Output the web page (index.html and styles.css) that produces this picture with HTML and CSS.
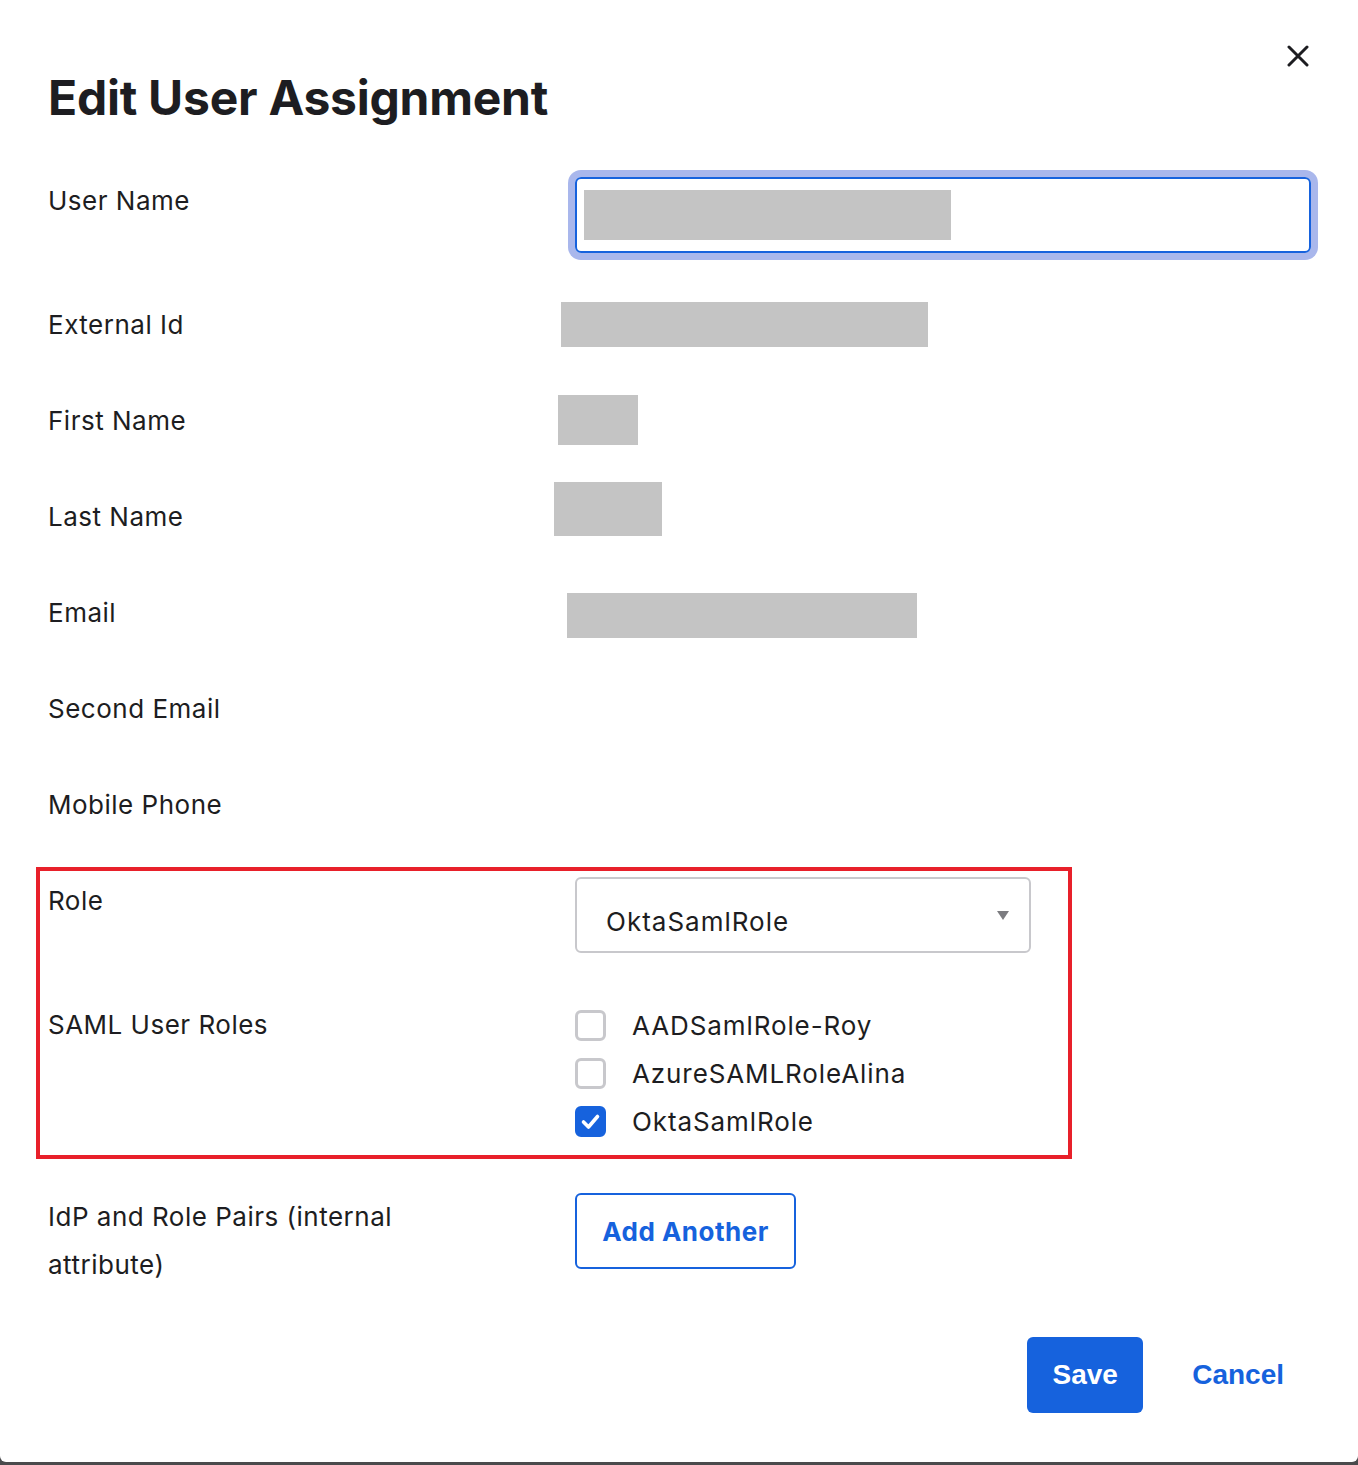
FILE: index.html
```html
<!DOCTYPE html>
<html lang="en">
<head>
<meta charset="utf-8">
<title>Edit User Assignment</title>
<link rel="stylesheet" href="styles.css">
</head>
<body>
<div class="modal">
  <header class="modal-header">
    <h1 class="title">Edit User Assignment</h1>
    <button class="close" aria-label="Close">
      <svg width="22" height="22" viewBox="0 0 22 22"><path d="M2 2 L20 20 M20 2 L2 20" stroke="#1d1d21" stroke-width="3" stroke-linecap="round" fill="none"/></svg>
    </button>
  </header>

  <div class="form">
    <div class="row">
      <div class="label">User Name</div>
      <div class="value">
        <div class="input focused"><div class="redact r-user"></div></div>
      </div>
    </div>
    <div class="row">
      <div class="label">External Id</div>
      <div class="value fixed"><div class="redact r-ext"></div></div>
    </div>
    <div class="row">
      <div class="label">First Name</div>
      <div class="value fixed"><div class="redact r-first"></div></div>
    </div>
    <div class="row">
      <div class="label">Last Name</div>
      <div class="value fixed"><div class="redact r-last"></div></div>
    </div>
    <div class="row">
      <div class="label">Email</div>
      <div class="value fixed"><div class="redact r-email"></div></div>
    </div>
    <div class="row">
      <div class="label">Second Email</div>
      <div class="value fixed"></div>
    </div>
    <div class="row">
      <div class="label">Mobile Phone</div>
      <div class="value fixed"></div>
    </div>

    <div class="highlight">
      <div class="row">
        <div class="label">Role</div>
        <div class="value">
          <div class="select">
            <span class="select-text">OktaSamlRole</span>
            <span class="caret"></span>
          </div>
        </div>
      </div>
      <div class="row">
        <div class="label">SAML User Roles</div>
        <div class="value">
          <ul class="checks">
            <li class="check"><span class="box"></span><span>AADSamlRole-Roy</span></li>
            <li class="check"><span class="box"></span><span>AzureSAMLRoleAlina</span></li>
            <li class="check"><span class="box checked"><svg width="31" height="31" viewBox="0 0 31 31"><path d="M8.5 16 L13.5 21 L22.5 10.5" stroke="#fff" stroke-width="3.6" stroke-linecap="round" stroke-linejoin="round" fill="none"/></svg></span><span>OktaSamlRole</span></li>
          </ul>
        </div>
      </div>
    </div>

    <div class="row">
      <div class="label">IdP and Role Pairs (internal<br>attribute)</div>
      <div class="value">
        <button class="btn-secondary">Add Another</button>
      </div>
    </div>
  </div>

  <footer class="footer">
    <button class="btn-primary">Save</button>
    <button class="btn-link">Cancel</button>
  </footer>
</div>
</body>
</html>
```

FILE: styles.css
```css
* { box-sizing: border-box; }
html, body { margin: 0; padding: 0; }
body {
  background: #4a4a4c;
  font-family: "Inter", "Liberation Sans", sans-serif;
  color: #1d1d21;
}
.modal {
  width: 1358px;
  height: 1462px;
  background: #ffffff;
  border-radius: 0 0 6px 6px;
  padding: 0 50px 0 48px;
}
.modal-header {
  display: flex;
  justify-content: space-between;
  align-items: flex-start;
}
.title {
  margin: 70px 0 0 0;
  font-size: 48px;
  line-height: 56px;
  font-weight: 700;
  letter-spacing: -0.25px;
}
.close {
  margin-top: 45px;
  margin-right: -1px;
  padding: 0;
  border: 0;
  background: none;
  width: 22px;
  height: 22px;
  display: block;
}
.close svg { display: block; }

.form {
  margin-top: 51px;
  display: flex;
  flex-direction: column;
  gap: 48px;
}
.row {
  display: grid;
  grid-template-columns: 527px 1fr;
  align-items: start;
}
.label {
  font-size: 26px;
  line-height: 48px;
  letter-spacing: 0.5px;
}
.value.fixed { height: 48px; }

.input {
  width: 736px;
  height: 76px;
  border: 2px solid #1662dd;
  border-radius: 6px;
  padding: 11px 7px;
}
.input.focused { box-shadow: 0 0 0 7px #a9b7ec; }

.redact { background: #c4c4c4; }
.r-user { width: 367px; height: 50px; }
.r-ext { width: 367px; height: 45px; margin: 1px 0 0 -14px; }
.r-first { width: 80px; height: 50px; margin: -2px 0 0 -17px; }
.r-last { width: 108px; height: 54px; margin: -11px 0 0 -21px; }
.r-email { width: 350px; height: 45px; margin: 4px 0 0 -8px; }

.highlight {
  display: flex;
  flex-direction: column;
  gap: 48px;
  width: 1036px;
  margin: -10px 0 -14px -12px;
  padding: 6px 8px 10px 8px;
  border: 4px solid #e8202a;
}

.select {
  width: 456px;
  height: 76px;
  border: 2px solid #c8c8cc;
  border-radius: 6px;
  display: flex;
  align-items: center;
  justify-content: space-between;
  padding: 14px 20px 0 29px;
}
.select-text { font-size: 26px; line-height: 48px; letter-spacing: 1px; }
.caret {
  width: 0; height: 0;
  border-left: 6px solid transparent;
  border-right: 6px solid transparent;
  border-top: 9px solid #7c7c80;
  margin-top: -14px;
}

.checks { list-style: none; margin: 0; padding: 0; }
.check {
  display: flex;
  align-items: center;
  gap: 26px;
  height: 48px;
  font-size: 26px;
  letter-spacing: 0.9px;
}
.box {
  width: 31px;
  height: 31px;
  border: 3px solid #c8c8cc;
  border-radius: 6px;
  flex: none;
  position: relative;
}
.box.checked { background: #1662dd; border-color: #1662dd; }
.box.checked svg { position: absolute; left: -3px; top: -3px; }

.btn-secondary {
  width: 221px;
  height: 76px;
  border: 2px solid #1662dd;
  border-radius: 6px;
  background: #fff;
  color: #1662dd;
  font-family: "Inter", "Liberation Sans", sans-serif;
  font-size: 26px;
  font-weight: 700;
  padding: 0;
  letter-spacing: 0.5px;
}

.footer {
  margin-top: 48px;
  display: flex;
  justify-content: flex-end;
  align-items: center;
  gap: 24px;
}
.btn-primary {
  width: 116px;
  height: 76px;
  border: 0;
  border-radius: 6px;
  background: #1662dd;
  color: #fff;
  font-family: "Liberation Sans", "Inter", sans-serif;
  font-size: 28px;
  font-weight: 700;
  padding: 0;
}
.btn-link {
  border: 0;
  background: none;
  color: #1662dd;
  font-family: "Liberation Sans", "Inter", sans-serif;
  font-size: 28px;
  font-weight: 700;
  padding: 0 24px 0 25px;
  height: 76px;
}
```
